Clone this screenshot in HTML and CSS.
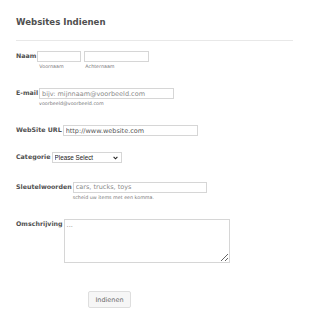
FILE: index.html
```html
<!DOCTYPE html>
<html lang="nl">
<head>
<meta charset="utf-8">
<title>Websites Indienen</title>
<link rel="stylesheet" href="styles.css">
</head>
<body>
<form class="form">
  <h2 class="title">Websites Indienen</h2>
  <hr class="divider">
  <ul class="fields">
    <li class="row row-sub">
      <label class="lbl">Naam</label>
      <div class="name-parts">
        <span class="part">
          <input class="inp w-first" type="text">
          <span class="sub sub-first">Voornaam</span>
        </span>
        <span class="part">
          <input class="inp w-last" type="text">
          <span class="sub sub-last">Achternaam</span>
        </span>
      </div>
    </li>
    <li class="row row-sub">
      <label class="lbl">E-mail</label>
      <div class="field">
        <input class="inp w-wide" type="text" placeholder="bijv: mijnnaam@voorbeeld.com">
        <span class="sub">voorbeeld@voorbeeld.com</span>
      </div>
    </li>
    <li class="row">
      <label class="lbl">WebSite URL</label>
      <div class="field">
        <input class="inp w-wide" type="text" value="http://www.website.com">
      </div>
    </li>
    <li class="row row-select">
      <label class="lbl">Categorie</label>
      <div class="field">
        <span class="sel-wrap">
          <select class="sel">
            <option>Please Select</option>
          </select>
          <svg class="chev" width="5" height="4" viewBox="0 0 5 4" aria-hidden="true">
            <path d="M0.6 0.8 L2.5 2.8 L4.4 0.8" fill="none" stroke="#222" stroke-width="1.1"/>
          </svg>
        </span>
      </div>
    </li>
    <li class="row row-sub">
      <label class="lbl">Sleutelwoorden</label>
      <div class="field">
        <input class="inp w-keys" type="text" placeholder="cars, trucks, toys">
        <span class="sub sub-hint">scheid uw items met een komma.</span>
      </div>
    </li>
    <li class="row row-area">
      <label class="lbl">Omschrijving</label>
      <div class="field">
        <textarea class="area" placeholder="..."></textarea>
      </div>
    </li>
    <li class="row-btn">
      <button class="btn" type="button">Indienen</button>
    </li>
  </ul>
</form>
</body>
</html>
```

FILE: styles.css
```css
html, body {
  margin: 0;
  padding: 0;
  background: #fff;
}

body {
  font-family: "DejaVu Sans", Verdana, sans-serif;
  color: #555;
}

.form {
  padding: 0 17px 0 16px;
  width: 277px;
}

.title {
  margin: 0;
  padding-top: 16px;
  font-size: 8.6px;
  line-height: 12px;
  font-weight: bold;
  color: #505050;
}

.divider {
  margin: 12px 0 0;
  border: 0;
  border-top: 1px solid #e8e8e8;
  height: 0;
}

.fields {
  list-style: none;
  margin: 10px 0 0;
  padding: 0;
}

.row {
  display: flex;
  align-items: flex-start;
  padding-bottom: 16px;
}

.row-select {
  padding-bottom: 18.5px;
}

.row-area {
  padding-bottom: 24px;
}

.lbl {
  font-size: 6.3px;
  line-height: 8px;
  font-weight: bold;
  color: #505050;
  margin-top: 1px;
  margin-right: 1px;
  white-space: nowrap;
}

.field {
  display: flex;
  flex-direction: column;
}

.name-parts {
  display: flex;
  gap: 3px;
}

.part {
  display: flex;
  flex-direction: column;
}

.inp {
  box-sizing: border-box;
  height: 11px;
  margin: 0;
  padding: 0 2px;
  border: 1px solid #d6d6d6;
  font-family: "DejaVu Sans", Verdana, sans-serif;
  font-size: 6.5px;
  color: #555;
  background: #fff;
  outline: none;
}

.inp::placeholder,
.area::placeholder {
  color: #8a8a8a;
}

.w-first { width: 44px; }
.w-last { width: 65px; }
.w-wide { width: 135px; }
.w-keys { width: 134px; }

.sub {
  display: block;
  height: 10px;
  padding-top: 2px;
  box-sizing: border-box;
  font-size: 4.8px;
  line-height: 6px;
  color: #777;
  white-space: nowrap;
}

.sub-first { padding-left: 2px; }
.sub-last { padding-left: 1px; }

.sel-wrap {
  position: relative;
  display: block;
  width: 70px;
  height: 11px;
}

.sel {
  -webkit-appearance: none;
  appearance: none;
  display: block;
  box-sizing: border-box;
  width: 70px;
  height: 11px;
  margin: 0;
  padding: 0 0 0 2px;
  border: 1px solid #d6d6d6;
  border-radius: 0;
  background: #fff;
  font-family: "Liberation Sans", Arial, sans-serif;
  font-size: 6.3px;
  line-height: 9px;
  color: #222;
  outline: none;
}

.chev {
  position: absolute;
  right: 4px;
  top: 4px;
  pointer-events: none;
}

.area {
  display: block;
  box-sizing: border-box;
  width: 166px;
  height: 44px;
  margin: 0;
  padding: 1px 2px;
  border: 1px solid #d6d6d6;
  font-family: "DejaVu Sans", Verdana, sans-serif;
  font-size: 6.5px;
  color: #555;
  outline: none;
}

.row-btn {
  padding-left: 72px;
}

.btn {
  box-sizing: border-box;
  width: 43px;
  height: 17px;
  margin: 0;
  padding: 0;
  border: 1px solid #dedede;
  border-radius: 2px;
  background: #f6f6f6;
  font-family: "DejaVu Sans", Verdana, sans-serif;
  font-size: 6.5px;
  color: #666;
}
```
